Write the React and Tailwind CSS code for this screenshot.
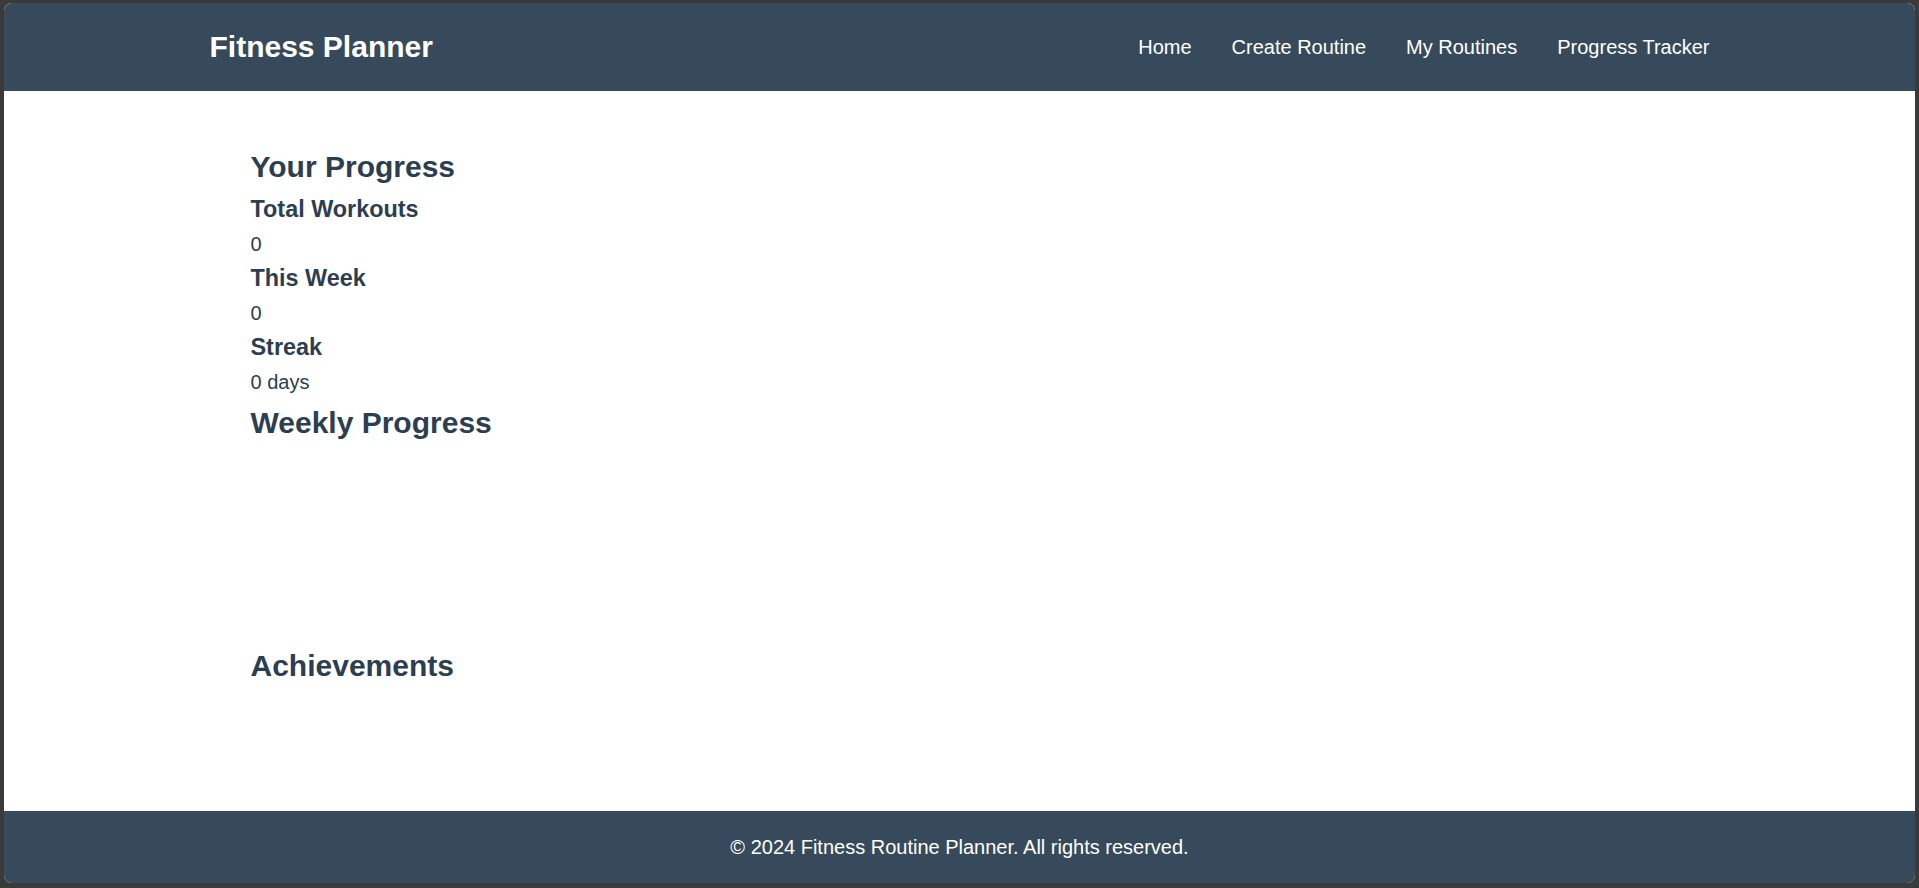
import React from "react";

const NAV = ["Home", "Create Routine", "My Routines", "Progress Tracker"];

const STATS = [
  { label: "Total Workouts", value: "0" },
  { label: "This Week", value: "0" },
  { label: "Streak", value: "0 days" },
];

export default function App() {
  return (
    <div className="h-[888px] w-full bg-[#3a3a3a] pl-[4px] pr-[4px] pt-[3px] pb-[5px] font-['Liberation_Sans',Arial,sans-serif]">
      <div className="flex h-full flex-col overflow-hidden rounded-[8px] bg-white">
        <header className="h-[88px] shrink-0 bg-[#374a5b]">
          <div className="mx-auto flex h-full w-[1500px] items-center justify-between">
            <div className="text-[30px] font-bold leading-[36px] text-white">Fitness Planner</div>
            <nav className="flex items-center gap-[40px]">
              {NAV.map((item) => (
                <a key={item} href="#" className="text-[20px] leading-[24px] text-white">
                  {item}
                </a>
              ))}
            </nav>
          </div>
        </header>

        <main className="flex-1 text-[#2c3e50]">
          <div className="mx-auto w-[1500px] px-[41px] pt-[58px]">
            <h2 className="mb-[7px] text-[30px] font-bold leading-[36px]">Your Progress</h2>
            {STATS.map((s) => (
              <div key={s.label}>
                <h3 className="mb-[2px] text-[23.4px] font-bold leading-[34px]">{s.label}</h3>
                <p className="text-[20px] leading-[33px]">{s.value}</p>
              </div>
            ))}

            <h2 className="mt-[6px] text-[30px] font-bold leading-[36px]">Weekly Progress</h2>
            {/* chart area, empty until there is data */}
            <div className="h-[207px]" />

            <h2 className="text-[30px] font-bold leading-[36px]">Achievements</h2>
          </div>
        </main>

        <footer className="flex h-[72px] shrink-0 items-center justify-center bg-[#374a5b]">
          <p className="text-[20px] text-white">© 2024 Fitness Routine Planner. All rights reserved.</p>
        </footer>
      </div>
    </div>
  );
}
